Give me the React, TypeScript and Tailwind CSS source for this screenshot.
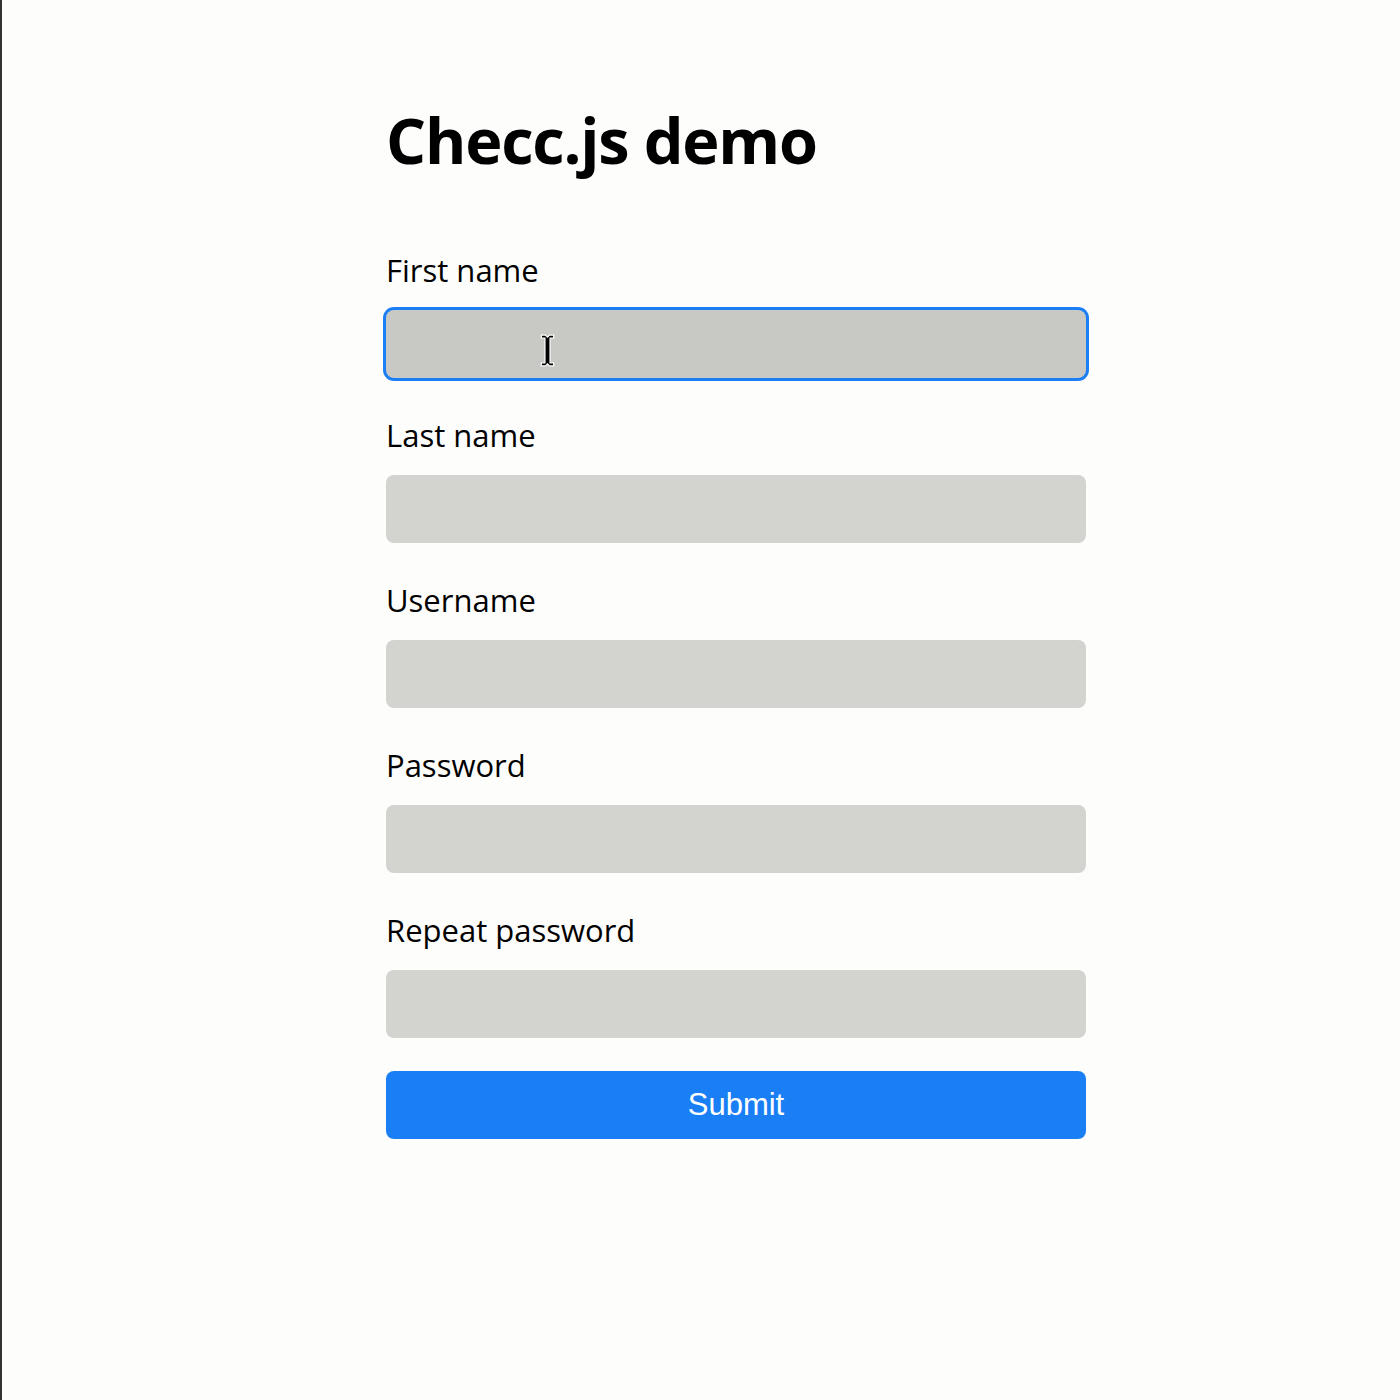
import { useState } from 'react';

const fields = [
  { label: 'First name', type: 'text', focused: true },
  { label: 'Last name', type: 'text' },
  { label: 'Username', type: 'text' },
  { label: 'Password', type: 'password' },
  { label: 'Repeat password', type: 'password' },
];

function Field({ label, type, focused }: { label: string; type: string; focused?: boolean }) {
  const [value, setValue] = useState('');
  return (
    <label className="flex flex-col">
      <span className="text-[31px] leading-[40px] text-black">{label}</span>
      <div className="relative mt-[20px]">
        <input
          type={type}
          value={value}
          onChange={(e) => setValue(e.target.value)}
          className={
            focused
              ? 'block h-[68px] w-full rounded-[8px] bg-[#c8c8c4] outline-none ring-[3px] ring-[#1a7ff5]'
              : 'block h-[68px] w-full rounded-[8px] bg-[#d3d3d0] outline-none'
          }
        />
        {focused && (
          // mouse cursor caught in the screenshot
          <svg className="absolute left-[153px] top-[23px]" width="17" height="35" viewBox="0 0 16 34">
            <path
              d="M2 2h4l2 2 2-2h4v3h-3.5v24H14v3h-4l-2-2-2 2H2v-3h3.5V5H2z"
              fill="#000"
              stroke="#fff"
              strokeWidth="1.2"
            />
          </svg>
        )}
      </div>
    </label>
  );
}

export default function App() {
  return (
    <div className="min-h-[1400px] border-l-2 border-[#333] bg-[#fdfdfb] font-['Open_Sans',sans-serif]">
      <div className="ml-[384px] w-[700px] pt-[96px]">
        <h1 className="text-[63px] font-bold leading-[88px] tracking-[-1.2px] text-black">Checc.js demo</h1>
        <form className="mt-[66px] flex flex-col gap-[37px]" onSubmit={(e) => e.preventDefault()}>
          {fields.map((f) => (
            <Field key={f.label} {...f} />
          ))}
          <button
            type="submit"
            className="-mt-[4px] h-[68px] w-full rounded-[8px] bg-[#1a7ff5] font-['Liberation_Sans',sans-serif] text-[31px] text-white"
          >
            Submit
          </button>
        </form>
      </div>
    </div>
  );
}
